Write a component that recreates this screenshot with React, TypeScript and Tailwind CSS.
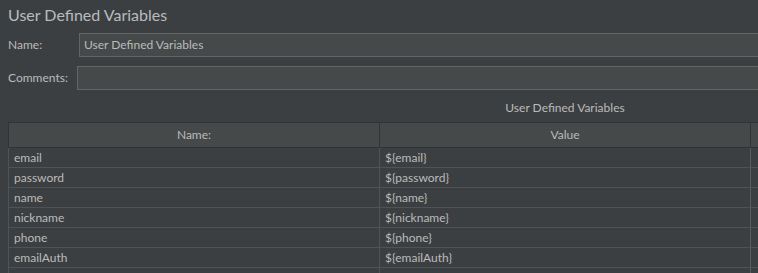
const ROWS = [
  ['email', '${email}'],
  ['password', '${password}'],
  ['name', '${name}'],
  ['nickname', '${nickname}'],
  ['phone', '${phone}'],
  ['emailAuth', '${emailAuth}'],
  ['', ''],
];

export default function App() {
  return (
    <div className="w-[758px] h-[273px] overflow-hidden bg-[#3c3f41] text-[#bbbbbb] font-['Lato','Open_Sans',sans-serif]">
      <div className="w-[1130px]">
        <div className="h-[30px] pl-2 flex items-center text-[16px] text-[#b8bcbe]">User Defined Variables</div>

        <div className="mt-[3px] flex items-center h-[24px] text-[12px]">
          <span className="w-[79px] pl-2 shrink-0">Name:</span>
          <div className="flex-1 h-full flex items-center px-1 bg-[#45494a] border border-[#646464]">User Defined Variables</div>
        </div>

        <div className="mt-[9px] flex items-center h-[24px] text-[12px]">
          <span className="w-[77px] pl-2 shrink-0">Comments:</span>
          <div className="flex-1 h-full bg-[#45494a] border border-[#646464]" />
        </div>

        <div className="h-[32px] flex items-center pt-1 text-[12px] ml-2 w-[1114px] justify-center">User Defined Variables</div>

        <div className="ml-2 text-[12px]">
          <div className="flex h-[26px] bg-[#45494a] border-t border-b border-l border-[#313335]">
            <div className="w-[371px] flex items-center justify-center border-r border-[#313335]">Name:</div>
            <div className="w-[371px] flex items-center justify-center border-r border-[#313335]">Value</div>
            <div className="flex-1" />
          </div>
          {ROWS.map(([name, value], i) => (
            <div key={i} className="flex h-[20px] border-b border-l border-[#4f5355]">
              <div className="w-[371px] flex items-center pl-[5px] border-r border-[#4f5355]">{name}</div>
              <div className="w-[371px] flex items-center pl-[5px] border-r border-[#5a5e60]">{value}</div>
              <div className="flex-1" />
            </div>
          ))}
        </div>
      </div>
    </div>
  );
}
